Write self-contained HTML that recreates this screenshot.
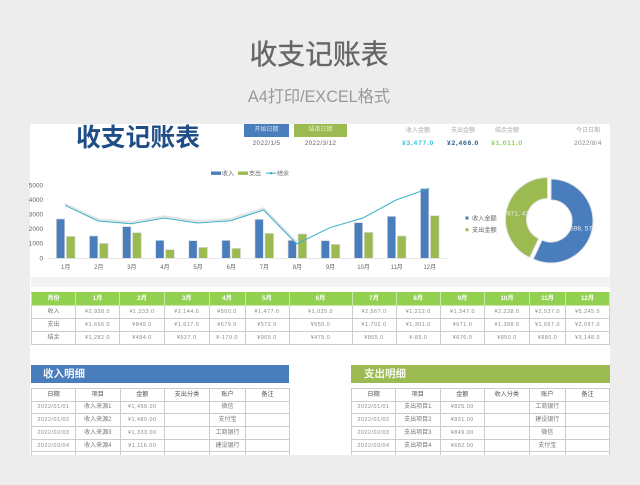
<!DOCTYPE html>
<html lang="zh"><head><meta charset="utf-8"><title>收支记账表</title>
<style>
html,body{margin:0;padding:0;background:#ededed}
body{width:640px;height:485px;position:relative;overflow:hidden;font-family:"Liberation Sans","Noto Sans CJK SC",sans-serif}
.a{position:absolute;white-space:nowrap}
.c{text-align:center}
.m{font-family:"Liberation Sans","Noto Sans CJK SC",sans-serif;letter-spacing:.35px}
table{position:absolute;border-collapse:collapse;table-layout:fixed;background:#fff}
td{border:1px solid #ccc;padding:0;text-align:center;vertical-align:middle;color:#888;font-size:5.4px;line-height:10px;letter-spacing:.5px;font-family:"Liberation Sans","Noto Sans CJK SC",sans-serif;overflow:hidden;white-space:nowrap}
td.z{font-size:6px;color:#777;letter-spacing:0}
tr.g td{background:#92d050;color:#fff;border-color:#c9e8a8;border-top-color:#92d050;font-size:6.2px;font-weight:700;letter-spacing:0}
tr.h td{color:#555;font-size:6.2px;letter-spacing:0}
#wrap{position:absolute;inset:0;filter:blur(.35px)}
</style></head><body><div id="wrap">
<div class="a c" style="left:0;width:640px;top:35px;font-size:27.8px;line-height:40px;color:#666;margin-left:-1px;-webkit-text-stroke:.35px #666">收支记账表</div>
<div class="a c" style="left:0;width:640px;top:86px;font-size:16.2px;line-height:22px;color:#999;margin-left:-1px">A4打印/EXCEL格式</div>

<div class="a" style="left:30px;top:124px;width:580px;height:331px;background:#fff"></div>
<div class="a" style="left:31px;top:277px;width:579px;height:10px;background:#f3f3f3"></div>

<div class="a" style="left:76px;top:124px;font-size:24.8px;line-height:30px;font-weight:700;color:#1f4e87">收支记账表</div>
<div class="a c" style="left:244px;top:124px;width:45px;height:13px;line-height:13px;background:#4a7dbb;color:#d5e2f2;font-size:6px">开始日期</div>
<div class="a c" style="left:294px;top:124px;width:53px;height:13px;line-height:13px;background:#9bbb52;color:#e6efcf;font-size:6px">结束日期</div>
<div class="a c m" style="left:244px;top:140px;width:45px;font-size:6.4px;line-height:8px;color:#666">2022/1/5</div>
<div class="a c m" style="left:294px;top:140px;width:53px;font-size:6.4px;line-height:8px;color:#666">2022/3/12</div>

<div class="a c" style="left:398px;top:127px;width:40px;font-size:6px;line-height:8px;color:#aaa">收入金额</div>
<div class="a c" style="left:443px;top:127px;width:40px;font-size:6px;line-height:8px;color:#aaa">支出金额</div>
<div class="a c" style="left:487px;top:127px;width:40px;font-size:6px;line-height:8px;color:#aaa">结余金额</div>
<div class="a c" style="left:568px;top:127px;width:40px;font-size:6px;line-height:8px;color:#aaa">今日日期</div>
<div class="a c m" style="left:398px;top:140px;width:40px;font-size:6.8px;line-height:8px;letter-spacing:.7px;font-weight:700;color:#35c4e8">¥3,477.0</div>
<div class="a c m" style="left:443px;top:140px;width:40px;font-size:6.8px;line-height:8px;letter-spacing:.7px;font-weight:700;color:#2f5f8f">¥2,466.0</div>
<div class="a c m" style="left:487px;top:140px;width:40px;font-size:6.8px;line-height:8px;letter-spacing:.7px;font-weight:700;color:#92d050">¥1,011.0</div>
<div class="a c m" style="left:568px;top:140px;width:40px;font-size:6.4px;line-height:8px;color:#888">2022/8/4</div>

<svg class="a" style="left:0;top:0" width="640" height="485" viewBox="0 0 640 485">
<line x1="48" y1="258.5" x2="447" y2="258.5" stroke="#e6e6e6" stroke-width="1"/>
<g fill="#dcdcdc">
<rect x="56" y="218.6" width="9" height="40"/><rect x="66" y="236" width="9.4" height="22.5"/>
<rect x="89.1" y="235.6" width="9" height="23"/><rect x="99.1" y="243" width="9.4" height="15.5"/>
<rect x="122.2" y="226.3" width="9" height="32"/><rect x="132.2" y="232.3" width="9.4" height="26"/>
<rect x="155.3" y="240" width="9" height="18"/><rect x="165.3" y="249.3" width="9.4" height="9"/>
<rect x="188.4" y="240.3" width="9" height="18"/><rect x="198.4" y="247" width="9.4" height="11"/>
<rect x="221.5" y="240" width="9" height="18"/><rect x="231.5" y="248" width="9.4" height="10"/>
<rect x="254.6" y="219" width="9" height="39"/><rect x="264.6" y="233" width="9.4" height="25"/>
<rect x="287.7" y="240" width="9" height="18"/><rect x="297.7" y="233.6" width="9.4" height="25"/>
<rect x="320.8" y="240.3" width="9" height="18"/><rect x="330.8" y="244" width="9.4" height="14"/>
<rect x="353.9" y="222.3" width="9" height="36"/><rect x="363.9" y="232" width="9.4" height="26"/>
<rect x="387" y="216" width="9" height="42"/><rect x="397" y="235.6" width="9.4" height="23"/>
<rect x="420.1" y="188" width="9" height="70"/><rect x="430.1" y="215.3" width="9.4" height="43"/>
</g>
<g fill="#4a7dbb">
<rect x="56.7" y="219.3" width="7.7" height="38.7"/><rect x="89.8" y="236.3" width="7.7" height="21.7"/>
<rect x="122.9" y="227" width="7.7" height="31"/><rect x="156" y="240.7" width="7.7" height="17.3"/>
<rect x="189.1" y="241" width="7.7" height="17"/><rect x="222.2" y="240.7" width="7.7" height="17.3"/>
<rect x="255.3" y="219.7" width="7.7" height="38.3"/><rect x="288.4" y="240.7" width="7.7" height="17.3"/>
<rect x="321.5" y="241" width="7.7" height="17"/><rect x="354.6" y="223" width="7.7" height="35"/>
<rect x="387.7" y="216.7" width="7.7" height="41.3"/><rect x="420.8" y="189" width="7.7" height="69"/>
</g>
<g fill="#9bbb52">
<rect x="66.7" y="236.7" width="8" height="21.3"/><rect x="99.8" y="243.7" width="8" height="14.3"/>
<rect x="132.9" y="233" width="8" height="25"/><rect x="166" y="250" width="8" height="8"/>
<rect x="199.1" y="247.7" width="8" height="10.3"/><rect x="232.2" y="248.7" width="8" height="9.3"/>
<rect x="265.3" y="233.7" width="8" height="24.3"/><rect x="298.4" y="234.3" width="8" height="23.7"/>
<rect x="331.5" y="244.7" width="8" height="13.3"/><rect x="364.6" y="232.7" width="8" height="25.3"/>
<rect x="397.7" y="236.3" width="8" height="21.7"/><rect x="430.8" y="216" width="8" height="42"/>
</g>
<polyline fill="none" stroke="#e4e4e4" stroke-width="2" points="65,203.6 98.1,219.3 131.2,222 164.3,216.3 197.4,221.3 230.5,219 263.6,208.3 296.7,242.3"/>
<polyline fill="none" stroke="#39aecb" stroke-width="1" points="65,205.3 98.1,221 131.2,223.7 164.3,218 197.4,223 230.5,220.7 263.6,210 296.7,244 329.8,227.7 362.9,218 396,200 429.1,188.3"/>
<rect x="211" y="171.5" width="10" height="3.4" fill="#4a7dbb"/>
<rect x="238" y="171.5" width="10" height="3.4" fill="#9bbb52"/>
<line x1="266" y1="173.2" x2="276" y2="173.2" stroke="#39aecb"/><circle cx="271" cy="173.2" r="1.2" fill="#39aecb"/>
<g font-size="6" fill="#666" font-family="'Liberation Sans','Noto Sans CJK SC',sans-serif">
<text x="222" y="175.3">收入</text><text x="249" y="175.3">支出</text><text x="277" y="175.3">结余</text>
</g>
<g font-size="6.4" fill="#666" text-anchor="end" font-family="'Liberation Sans',sans-serif">
<text x="43" y="187.3">5000</text><text x="43" y="201.8">4000</text><text x="43" y="216.3">3000</text><text x="43" y="231">2000</text><text x="43" y="245.7">1000</text><text x="43" y="260.3">0</text>
</g>
<g font-size="6" fill="#666" text-anchor="middle" font-family="'Liberation Sans','Noto Sans CJK SC',sans-serif">
<text x="65.7" y="269">1月</text><text x="98.8" y="269">2月</text><text x="131.9" y="269">3月</text><text x="165" y="269">4月</text><text x="198.1" y="269">5月</text><text x="231.2" y="269">6月</text><text x="264.3" y="269">7月</text><text x="297.4" y="269">8月</text><text x="330.5" y="269">9月</text><text x="363.6" y="269">10月</text><text x="396.7" y="269">11月</text><text x="429.8" y="269">12月</text>
</g>
<path d="M551 179A42 42 0 1 1 533.25 259.07L542.13 240.03A21 21 0 1 0 551 200Z" fill="#4a7dbb" stroke="#e4e4e4" stroke-width="1"/>
<path d="M529.75 257.57A42 42 0 0 1 547.5 177.5L547.5 198.5A21 21 0 0 0 538.63 238.53Z" fill="#9bbb52" stroke="#e4e4e4" stroke-width="1"/>
<g font-size="6.6" fill="#e9eef5" font-family="'Liberation Sans',sans-serif">
<text x="507" y="215.5">671, 43</text><text x="570" y="230.5">598, 575</text>
</g>
<rect x="465.5" y="216.5" width="3" height="3" fill="#4a7dbb"/>
<rect x="465.5" y="228.2" width="3" height="3" fill="#9bbb52"/>
<g font-size="6.2" fill="#666" font-family="'Liberation Sans','Noto Sans CJK SC',sans-serif">
<text x="472" y="220.3">收入金额</text><text x="472" y="232">支出金额</text>
</g>
</svg>

<table style="left:31px;top:292px;width:578px;height:52px">
<colgroup><col style="width:44px"><col style="width:44px"><col style="width:45px"><col style="width:44.5px"><col style="width:36px"><col style="width:44px"><col style="width:63px"><col style="width:44px"><col style="width:44.5px"><col style="width:44px"><col style="width:45px"><col style="width:36px"><col style="width:44px"></colgroup>
<tr class="g" style="height:13.4px"><td>月份</td><td>1月</td><td>2月</td><td>3月</td><td>4月</td><td>5月</td><td>6月</td><td>7月</td><td>8月</td><td>9月</td><td>10月</td><td>11月</td><td>12月</td></tr>
<tr style="height:12.8px"><td class="z">收入</td><td>¥2,938.0</td><td>¥1,333.0</td><td>¥2,144.0</td><td>¥500.0</td><td>¥1,477.0</td><td>¥1,025.0</td><td>¥2,567.0</td><td>¥1,212.0</td><td>¥1,347.0</td><td>¥2,238.0</td><td>¥2,537.0</td><td>¥5,245.0</td></tr>
<tr style="height:13px"><td class="z">支出</td><td>¥1,656.0</td><td>¥849.0</td><td>¥1,617.0</td><td>¥679.0</td><td>¥572.0</td><td>¥550.0</td><td>¥1,702.0</td><td>¥1,301.0</td><td>¥671.0</td><td>¥1,388.0</td><td>¥1,657.0</td><td>¥2,097.0</td></tr>
<tr style="height:12.8px"><td class="z">结余</td><td>¥1,282.0</td><td>¥484.0</td><td>¥527.0</td><td>¥-179.0</td><td>¥905.0</td><td>¥475.0</td><td>¥865.0</td><td>¥-89.0</td><td>¥676.0</td><td>¥850.0</td><td>¥880.0</td><td>¥3,148.0</td></tr>
</table>

<div class="a" style="left:31px;top:364.5px;width:258px;height:18.5px;line-height:18.5px;background:#4a7dbb;color:#f2f5fa;font-size:10.5px;font-weight:700;text-indent:12px">收入明细</div>
<div class="a" style="left:351px;top:364.5px;width:259px;height:18.5px;line-height:18.5px;background:#9bbb52;color:#f6f9ec;font-size:10.5px;font-weight:700;text-indent:13px">支出明细</div>

<div class="a" style="left:30px;top:388px;width:260px;height:67px;overflow:hidden">
<table style="left:1px;top:0;width:258px">
<colgroup><col style="width:44px"><col style="width:44.5px"><col style="width:44.5px"><col style="width:45px"><col style="width:36px"><col style="width:44px"></colgroup>
<tr class="h" style="height:12.6px"><td>日期</td><td>项目</td><td>金额</td><td>支出分类</td><td>账户</td><td>备注</td></tr>
<tr style="height:12.7px"><td>2022/01/01</td><td class="z">收入来源1</td><td>¥1,458.00</td><td></td><td class="z">微信</td><td></td></tr>
<tr style="height:12.7px"><td>2022/01/02</td><td class="z">收入来源2</td><td>¥1,480.00</td><td></td><td class="z">支付宝</td><td></td></tr>
<tr style="height:12.7px"><td>2022/02/03</td><td class="z">收入来源3</td><td>¥1,333.00</td><td></td><td class="z">工商银行</td><td></td></tr>
<tr style="height:12.7px"><td>2022/03/04</td><td class="z">收入来源4</td><td>¥1,116.00</td><td></td><td class="z">建设银行</td><td></td></tr>
<tr style="height:12.7px"><td></td><td></td><td></td><td></td><td></td><td></td></tr>
</table></div>

<div class="a" style="left:350px;top:388px;width:260px;height:67px;overflow:hidden">
<table style="left:1px;top:0;width:258px">
<colgroup><col style="width:44px"><col style="width:44.5px"><col style="width:44.5px"><col style="width:44.5px"><col style="width:36.5px"><col style="width:44px"></colgroup>
<tr class="h" style="height:12.6px"><td>日期</td><td>项目</td><td>金额</td><td>收入分类</td><td>账户</td><td>备注</td></tr>
<tr style="height:12.7px"><td>2022/01/01</td><td class="z">支出项目1</td><td>¥825.00</td><td></td><td class="z">工商银行</td><td></td></tr>
<tr style="height:12.7px"><td>2022/01/02</td><td class="z">支出项目2</td><td>¥831.00</td><td></td><td class="z">建设银行</td><td></td></tr>
<tr style="height:12.7px"><td>2022/02/03</td><td class="z">支出项目3</td><td>¥849.00</td><td></td><td class="z">微信</td><td></td></tr>
<tr style="height:12.7px"><td>2022/03/04</td><td class="z">支出项目4</td><td>¥682.00</td><td></td><td class="z">支付宝</td><td></td></tr>
<tr style="height:12.7px"><td></td><td></td><td></td><td></td><td></td><td></td></tr>
</table></div>
</div></body></html>
